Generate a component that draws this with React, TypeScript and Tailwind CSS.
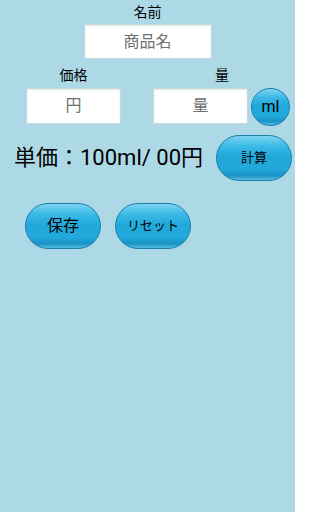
import React from "react";

const font = { fontFamily: 'Roboto, "Noto Sans CJK JP", "Noto Sans", sans-serif' };

function GlossButton({ className, children }: { className: string; children: React.ReactNode }) {
  return (
    <div
      className={
        "relative flex items-center justify-center overflow-hidden border-[1.5px] border-[#1a7fab] bg-[linear-gradient(to_bottom,#7ed4f2_0%,#3dbbe6_22%,#22a9dc_45%,#22a9dc_75%,#1b93c6_90%,#55bde0_100%)] text-black " +
        className
      }
    >
      <span className="relative">{children}</span>
    </div>
  );
}

function Input({ className, text }: { className: string; text: string }) {
  return (
    <div
      className={
        "flex items-center justify-center border border-[#c5d9e1] bg-white text-[#707070] shadow-[inset_0_1px_2px_rgba(0,0,0,0.10)] " +
        className
      }
    >
      {text}
    </div>
  );
}

export default function App() {
  return (
    <div className="w-[295px] h-[512px] bg-[#add8e6] overflow-hidden" style={font}>
      <div className="flex flex-col items-center pt-[3px]">
        <div className="text-[14px] leading-[18px] text-black">名前</div>
        <Input className="mt-[3px] w-[128px] h-[35px] text-[16px]" text="商品名" />
      </div>
      <div className="flex mt-[7px]">
        <div className="ml-[26px] w-[95px] flex flex-col items-center">
          <div className="text-[14px] leading-[18px] text-black">価格</div>
          <Input className="mt-[4px] w-[95px] h-[36px] text-[16px]" text="円" />
        </div>
        <div className="ml-[32px] w-[138px] flex flex-col">
          <div className="text-[14px] leading-[18px] text-black text-center">量</div>
          <div className="flex items-start mt-[4px]">
            <Input className="w-[95px] h-[36px] text-[16px]" text="量" />
            <GlossButton className="ml-[3px] w-[39px] h-[38px] rounded-full text-[16px]">ml</GlossButton>
          </div>
        </div>
      </div>
      <div className="flex items-center mt-[9px]">
        <div className="ml-[14px] text-[22px] leading-[28px] text-black whitespace-nowrap">単価：100ml/ 00円</div>
        <GlossButton className="ml-auto mr-[3px] w-[76px] h-[46px] rounded-[23px] text-[13px]">計算</GlossButton>
      </div>
      <div className="flex mt-[22px]">
        <GlossButton className="ml-[25px] w-[76px] h-[46px] rounded-[23px] text-[16px]">保存</GlossButton>
        <GlossButton className="ml-[14px] w-[76px] h-[46px] rounded-[23px] text-[13px]">リセット</GlossButton>
      </div>
    </div>
  );
}
